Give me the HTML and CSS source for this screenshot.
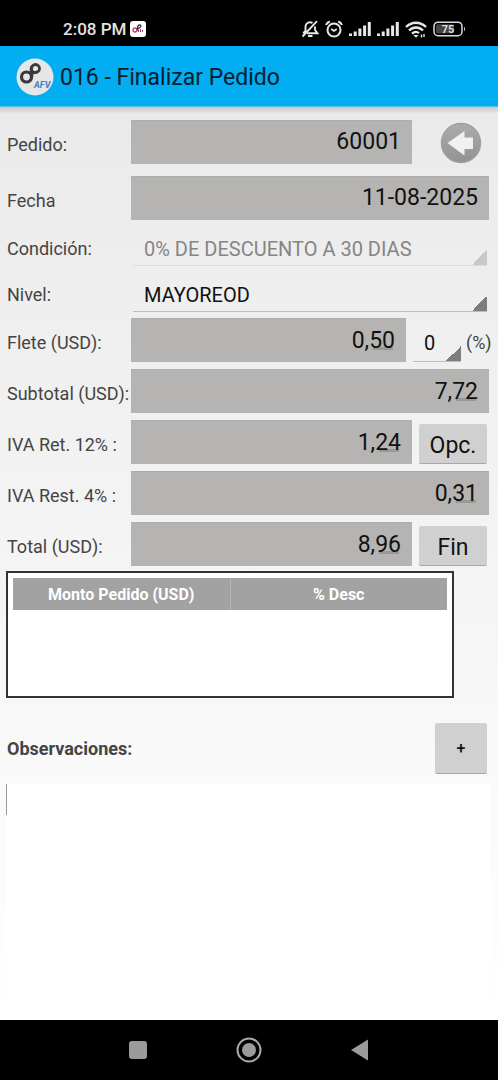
FILE: index.html
```html
<!DOCTYPE html>
<html lang="es">
<head>
<meta charset="utf-8">
<meta name="viewport" content="width=device-width, initial-scale=1">
<title>016 - Finalizar Pedido</title>
<link rel="stylesheet" href="styles.css">
</head>
<body>
<div class="status">
  <span class="clock">2:08 PM</span>
  <svg class="notif" width="16" height="16" viewBox="0 0 16 16" fill="none">
    <rect width="16" height="16" rx="3" fill="#fff"/>
    <circle cx="5" cy="9" r="2" stroke="#c0406c" stroke-width="1.3"/>
    <path d="M7 9.500C8.500 7 6.500 4.500 9 4c2-.3 2.500 1.500 1 2.500L7.500 8" stroke="#333" stroke-width="1.300"/>
    <path d="M8.500 8.500v2.500M10.500 8v3M12.500 9v2" stroke="#a04080"/>
  </svg>
  <div class="status-icons">
    <svg width="18" height="18" viewBox="0 0 18 18" fill="none" stroke="#e8e8e8" stroke-width="1.9">
      <path d="M14 6.500v3.500l2.500 3.300H6M11.500 3C8.500 1 4.500 3 4.500 7v3.500L2.200 13.300M7 16h4.500M16 1.200L1.500 16.500"/>
    </svg>
    <svg width="18" height="18" viewBox="0 0 18 18" fill="none" stroke="#e8e8e8" stroke-width="2">
      <circle cx="9" cy="10" r="6.500"/><path d="M1 5Q2 2.500 4.800 1.500M17 5Q16 2.500 13.200 1.500"/><path d="M6.200 9L9 11l2.800-2" stroke-width="1.700"/>
    </svg>
    <svg class="signal" width="22" height="16" viewBox="0 0 22 16" fill="#e8e8e8">
      <path d="M0 12.500h3v2.500H0zM4.700 10.500h3V15h-3zM9.400 7.500h3V15h-3zM14.100 4.500h3V15h-3zM18.800 1h3v14h-3z"/>
    </svg>
    <svg class="signal" width="22" height="16" viewBox="0 0 22 16" fill="#e8e8e8">
      <path d="M0 12.500h3v2.500H0zM4.700 10.500h3V15h-3zM9.400 7.500h3V15h-3zM14.100 4.500h3V15h-3zM18.800 1h3v14h-3z"/>
    </svg>
    <svg width="22" height="17" viewBox="0 0 22 17" fill="none" stroke="#e8e8e8" stroke-width="2.3">
      <path d="M1 6C7 .3 15 .3 21 6M4 9.500c4-4 10-4 14 0M7 12.700c2.500-2.300 5-2.300 7 -.5"/>
      <path d="M8.300 14L11 16.700l2.500-2.700z" fill="#e8e8e8" stroke="none"/>
      <path d="M16.500 16.500v-3M19 16v-3" stroke-width="1.400"/>
    </svg>
    <svg class="battery" width="33" height="16" viewBox="0 0 33 16">
      <rect x="1" y="1.200" width="28" height="13.500" rx="4" fill="none" stroke="#dcdcdc" stroke-width="1.500"/>
      <path d="M31 5.500q2 2.500 0 5z" fill="#dcdcdc"/>
      <rect x="3" y="3.300" width="18" height="9.300" rx="2" fill="#444"/>
      <text x="15" y="12" text-anchor="middle">75</text>
    </svg>
  </div>
</div>

<header class="appbar">
  <svg width="38" height="38" viewBox="0 0 38 38" fill="none">
    <circle cx="19" cy="19" r="18.500" fill="#e4e6e8"/>
    <circle cx="10.500" cy="19" r="5" stroke="#3a3a3a" stroke-width="3.200"/>
    <circle cx="19.500" cy="10.500" r="4" stroke="#3a3a3a" stroke-width="2.800"/>
    <path d="M15.500 20C18 16 12.500 12 16 8M12 14.500c4 1 8 1 10-1.500" stroke="#3a3a3a" stroke-width="2.500"/>
    <text class="logo-text" x="18" y="30">AFV</text>
  </svg>
  <h1>016 - Finalizar Pedido</h1>
</header>

<main class="form">
  <div class="row side">
    <label for="pedido">Pedido:</label>
    <input class="field" id="pedido" value="60001" readonly>
    <button class="back" aria-label="Volver">
      <svg width="42" height="42" viewBox="0 0 42 42">
        <defs><linearGradient id="disc" x1="0" y1="0" x2="0" y2="1"><stop offset="0" stop-color="#acacac"/><stop offset="1" stop-color="#929292"/></linearGradient></defs>
        <circle cx="21" cy="21" r="19.500" fill="url(#disc)" stroke="#a0a0a0" stroke-width="1.500"/>
        <path d="M7.500 21L24.500 9v6.500H33V27h-8.500v6.500z" fill="#f1f1f1"/>
      </svg>
    </button>
  </div>
  <div class="row">
    <label for="fecha">Fecha</label>
    <input class="field" id="fecha" value="11-08-2025" readonly>
  </div>
  <div class="choices">
    <div class="row pick">
      <label for="condicion">Condición:</label>
      <select id="condicion" disabled><option>0% DE DESCUENTO A 30 DIAS</option></select>
    </div>
    <div class="row pick">
      <label for="nivel">Nivel:</label>
      <select id="nivel"><option>MAYOREOD</option></select>
    </div>
  </div>
  <div class="amounts">
    <div class="row freight">
      <label for="flete">Flete (USD):</label>
      <input class="field decimal" id="flete" value="0,50" readonly>
      <select id="pct" aria-label="Porcentaje"><option>0</option></select>
      <label class="unit" for="pct">(%)</label>
    </div>
    <div class="row">
      <label for="subtotal">Subtotal (USD):</label>
      <input class="field decimal" id="subtotal" value="7,72" readonly>
    </div>
    <div class="row side">
      <label for="ret">IVA Ret. 12% :</label>
      <input class="field decimal" id="ret" value="1,24" readonly>
      <button class="btn">Opc.</button>
    </div>
    <div class="row">
      <label for="rest">IVA Rest. 4% :</label>
      <input class="field decimal" id="rest" value="0,31" readonly>
    </div>
    <div class="row side">
      <label for="total">Total (USD):</label>
      <input class="field decimal" id="total" value="8,96" readonly>
      <button class="btn">Fin</button>
    </div>
  </div>

  <div class="grid-box">
    <table>
      <thead><tr><th scope="col">Monto Pedido (USD)</th><th scope="col">% Desc</th></tr></thead>
    </table>
  </div>

  <div class="notes-head">
    <label for="obs">Observaciones:</label>
    <button class="btn add" aria-label="Agregar">+</button>
  </div>
  <textarea id="obs"></textarea>
</main>

<nav class="navbar">
  <button aria-label="Recientes"><svg width="20" height="20" viewBox="0 0 20 20"><rect x="1" y="1" width="18" height="18" rx="3" fill="#9b9b9b"/></svg></button>
  <button aria-label="Inicio"><svg width="26" height="26" viewBox="0 0 26 26"><circle cx="13" cy="13" r="11.500" fill="none" stroke="#a8a8a8" stroke-width="2"/><circle cx="13" cy="13" r="7" fill="#9b9b9b"/></svg></button>
  <button aria-label="Atrás"><svg width="20" height="22" viewBox="0 0 20 22"><path d="M1 11L18 .5v21z" fill="#9b9b9b"/></svg></button>
</nav>
</body>
</html>
```

FILE: styles.css
```css
* { box-sizing: border-box; }

body {
  margin: 0;
  min-height: 100vh;
  display: flex;
  flex-direction: column;
  font-family: Roboto, sans-serif;
  font-size: 18px;
  color: #444;
  background: #fff;
}

button, input, select, textarea {
  font: inherit;
  margin: 0;
  border: 0;
  border-radius: 0;
  outline: 0;
}

button { padding: 0; background: none; }
svg { display: block; flex: none; }

.status {
  height: 46px;
  display: flex;
  align-items: center;
  gap: 4px;
  padding: 12px 32px 0 63px;
  background: #000;
}

.clock { font-size: 17px; font-weight: 500; color: #e4e4e4; }

.status-icons {
  display: flex;
  align-items: center;
  gap: 6px;
  margin-left: auto;
}

.battery text { font-size: 11px; font-weight: 700; fill: #ddd; }

.appbar {
  height: 61px;
  display: flex;
  align-items: center;
  gap: 6px;
  padding: 1px 16px 0;
  background: #02adf1;
  border-bottom: 1px solid #5fbfe6;
}

.appbar h1 {
  margin: 0;
  padding-top: 1px;
  font-size: 23px;
  font-weight: 400;
  color: #06202e;
}

.logo-text { font-size: 9px; font-weight: 700; font-style: italic; fill: #3f7cc4; }

.form {
  flex: 1;
  display: flex;
  flex-direction: column;
  padding-top: 13px;
  background:
    linear-gradient(#c8c8c8, transparent) 0 0 / 100% 7px no-repeat,
    linear-gradient(#eaeaea, #fff);
}

.row {
  display: grid;
  grid-template-columns: 124px 1fr;
  height: 44px;
  padding: 0 9px 0 7px;
}

.row.side { grid-template-columns: 124px 1fr 77px; }
.row.freight { grid-template-columns: 124px 1fr 55px 28px; }

.row label {
  align-self: center;
  padding-top: 5px;
  white-space: nowrap;
}

.form > .row + .row { margin-top: 12px; }

.field {
  width: 100%;
  min-width: 0;
  padding: 0 11px 2px;
  font-size: 23px;
  text-align: right;
  color: #111;
  background: #b5b4b3;
  border-top: 1px solid #adadac;
}

.decimal {
  padding-bottom: 0;
  background: linear-gradient(#989898, #989898) right 13px bottom 12px / 20px 3px no-repeat #b5b4b3;
}

.back {
  justify-self: end;
  align-self: end;
  margin-right: 7px;
}

.btn {
  height: 40px;
  padding-top: 3px;
  font-size: 23px;
  color: #111;
  background: #d0d0d0;
  border-bottom: 1px solid #a8a8a8;
  border-radius: 2px;
}

.row .btn { align-self: end; margin: 0 2px 0 7px; }

.row.pick { height: 46px; }
.row.pick label { padding-top: 11px; }

select {
  appearance: none;
  width: 100%;
  font-size: 20px;
  color: #111;
  background: linear-gradient(135deg, transparent 50%, #7d7d7d 50%) right bottom / 15px 15px no-repeat;
  border-bottom: 1px solid #bdbdbd;
}

.pick select { width: auto; margin: 0 2px; padding: 12px 11px 0; }

select:disabled {
  color: #858585;
  opacity: 1;
  background-image: linear-gradient(135deg, transparent 50%, #c8c8c8 50%);
  border-color: #dedede;
}

.freight select { width: 48px; margin-left: 7px; padding: 7px 11px 0; }
.freight .unit { padding-left: 5px; }

.amounts {
  display: grid;
  gap: 7px;
  margin-top: 6px;
}

.grid-box {
  min-height: 127px;
  margin: 5px 44px 0 6px;
  padding: 5px;
  background: #fff;
  border: 2px solid #333;
}

table {
  width: 100%;
  table-layout: fixed;
  border-collapse: collapse;
  background: #a2a2a2;
}

th {
  height: 32px;
  padding: 0;
  font-size: 16px;
  font-weight: 700;
  color: #fff;
}

th + th { border-left: 1px solid #b4b4b4; }

.notes-head {
  display: flex;
  align-items: center;
  justify-content: space-between;
  padding: 25px 11px 10px 7px;
  font-weight: 700;
}

.notes-head label { padding-bottom: 1px; }

.btn.add { width: 52px; height: 51px; padding: 0; font-size: 16px; font-weight: 500; }

textarea {
  flex: 1;
  margin: 0 7px 0 6px;
  padding: 4px;
  resize: none;
  background: linear-gradient(#999, #999) 0 0 / 1px 31px no-repeat #fff;
}

.navbar {
  height: 60px;
  display: flex;
  justify-content: center;
  background: #000;
}

.navbar button { width: 111px; display: grid; place-items: center; }
```
